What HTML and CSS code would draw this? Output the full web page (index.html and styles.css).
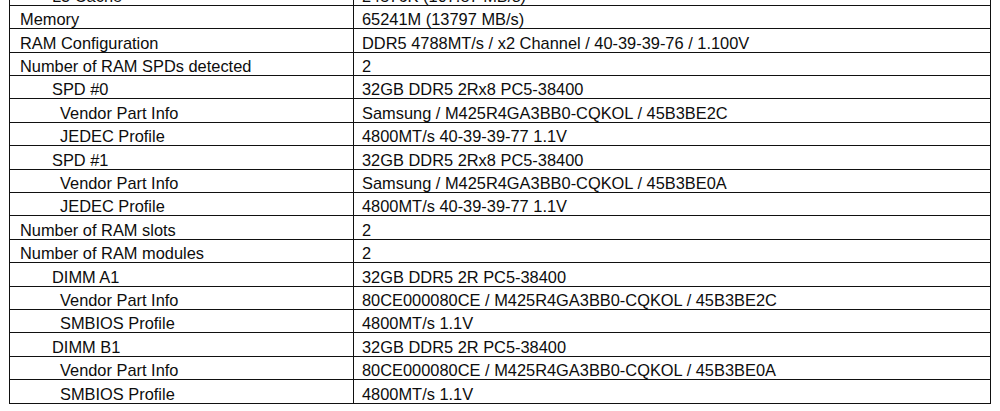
FILE: index.html
```html
<!DOCTYPE html>
<html>
<head>
<meta charset="utf-8">
<link rel="stylesheet" href="styles.css">
</head>
<body>
<table class="info">
  <colgroup><col class="c-key"><col class="c-val"></colgroup>
  <tr><td class="k l1">L3 Cache</td><td class="v">24576K (107.87 MB/s)</td></tr>
  <tr><td class="k l0">Memory</td><td class="v">65241M (13797 MB/s)</td></tr>
  <tr><td class="k l0">RAM Configuration</td><td class="v">DDR5 4788MT/s / x2 Channel / 40-39-39-76 / 1.100V</td></tr>
  <tr><td class="k l0">Number of RAM SPDs detected</td><td class="v">2</td></tr>
  <tr><td class="k l1">SPD #0</td><td class="v">32GB DDR5 2Rx8 PC5-38400</td></tr>
  <tr><td class="k l2">Vendor Part Info</td><td class="v">Samsung / M425R4GA3BB0-CQKOL / 45B3BE2C</td></tr>
  <tr><td class="k l2">JEDEC Profile</td><td class="v">4800MT/s 40-39-39-77 1.1V</td></tr>
  <tr><td class="k l1">SPD #1</td><td class="v">32GB DDR5 2Rx8 PC5-38400</td></tr>
  <tr><td class="k l2">Vendor Part Info</td><td class="v">Samsung / M425R4GA3BB0-CQKOL / 45B3BE0A</td></tr>
  <tr><td class="k l2">JEDEC Profile</td><td class="v">4800MT/s 40-39-39-77 1.1V</td></tr>
  <tr><td class="k l0">Number of RAM slots</td><td class="v">2</td></tr>
  <tr><td class="k l0">Number of RAM modules</td><td class="v">2</td></tr>
  <tr><td class="k l1">DIMM A1</td><td class="v">32GB DDR5 2R PC5-38400</td></tr>
  <tr><td class="k l2">Vendor Part Info</td><td class="v">80CE000080CE / M425R4GA3BB0-CQKOL / 45B3BE2C</td></tr>
  <tr><td class="k l2">SMBIOS Profile</td><td class="v">4800MT/s 1.1V</td></tr>
  <tr><td class="k l1">DIMM B1</td><td class="v">32GB DDR5 2R PC5-38400</td></tr>
  <tr><td class="k l2">Vendor Part Info</td><td class="v">80CE000080CE / M425R4GA3BB0-CQKOL / 45B3BE0A</td></tr>
  <tr><td class="k l2">SMBIOS Profile</td><td class="v">4800MT/s 1.1V</td></tr>
</table>
</body>
</html>
```

FILE: styles.css
```css
html, body {
  margin: 0;
  padding: 0;
  background: #ffffff;
}

body {
  font-family: "Liberation Sans", Arial, sans-serif;
  font-size: 16.4px;
  color: #0d0d0d;
  overflow: hidden;
}

.info {
  border-collapse: collapse;
  table-layout: fixed;
  width: 981px;
  margin: -18.5px 0 0 9px;
  border: 1.5px solid #111111;
}

.c-key { width: 344px; }
.c-val { width: 637px; }

.info tr {
  height: 23.4px;
}

.info td {
  border: 1px solid #111111;
  line-height: 16px;
  padding: 0 0 1px 0;
  vertical-align: bottom;
  white-space: nowrap;
}

.l0 { padding-left: 10px !important; }
.l1 { padding-left: 42px !important; }
.l2 { padding-left: 50px !important; }
.v { padding-left: 8px !important; }
```
